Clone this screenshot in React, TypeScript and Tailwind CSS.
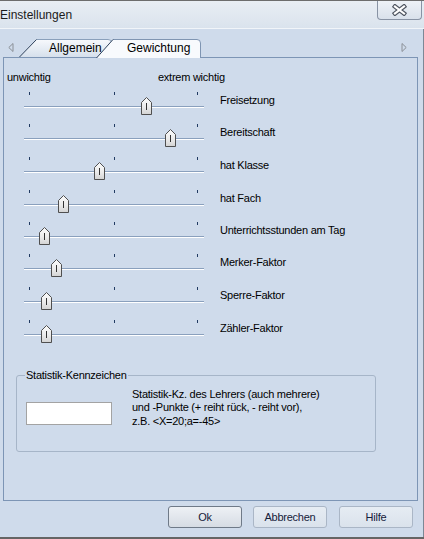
import React from "react";

type Row = { label: string; pos: number; h: string };

const rows: Row[] = [
  { label: "Freisetzung", pos: 117, h: "h-[32px]" },
  { label: "Bereitschaft", pos: 141, h: "h-[33px]" },
  { label: "hat Klasse", pos: 70, h: "h-[33px]" },
  { label: "hat Fach", pos: 34, h: "h-[32px]" },
  { label: "Unterrichtsstunden am Tag", pos: 15, h: "h-[32px]" },
  { label: "Merker-Faktor", pos: 27, h: "h-[33px]" },
  { label: "Sperre-Faktor", pos: 17, h: "h-[33px]" },
  { label: "Zähler-Faktor", pos: 17, h: "h-[33px]" },
];

function Thumb() {
  return (
    <svg width="11" height="18" viewBox="0 0 11 18">
      <defs>
        <linearGradient id="tg" x1="0" y1="0" x2="0" y2="1">
          <stop offset="0" stopColor="#fbfbfb" />
          <stop offset="0.55" stopColor="#ececec" />
          <stop offset="1" stopColor="#d3d3d3" />
        </linearGradient>
      </defs>
      <path
        d="M5.5 0.5 L10.5 5.5 L10.5 17.5 L0.5 17.5 L0.5 5.5 Z"
        fill="url(#tg)"
        stroke="#4f4f4f"
      />
      <line x1="5.5" y1="6" x2="5.5" y2="13" stroke="#333333" />
    </svg>
  );
}

function Slider({ pos }: { pos: number }) {
  return (
    <div className="relative w-[180px] h-full ml-[20px] shrink-0">
      <div className="absolute left-[5px] top-0 w-[1px] h-[3px] bg-[#213b62]" />
      <div className="absolute left-[90px] top-0 w-[1px] h-[3px] bg-[#213b62]" />
      <div className="absolute left-[173px] top-0 w-[1px] h-[3px] bg-[#213b62]" />
      <div className="absolute left-0 top-[14px] w-[180px] h-[1px] bg-[#8aa0bd]" />
      <div className="absolute left-0 top-[15px] w-[180px] h-[1px] bg-white" />
      <div className="absolute top-[5px] flex" style={{ left: pos }}>
        <Thumb />
      </div>
    </div>
  );
}

function Btn({ label, primary }: { label: string; primary?: boolean }) {
  return (
    <div
      className={
        primary
          ? "w-[74px] h-[22px] rounded-[3px] border border-[#6f7a88] bg-gradient-to-b from-[#eef1f5] to-[#d6dce4] flex items-center justify-center text-[11px] leading-[13px] tracking-[-0.25px] text-[#15203a]"
          : "w-[74px] h-[22px] rounded-[3px] border border-[#aab6c6] bg-gradient-to-b from-[#e6ecf3] to-[#dae2ec] flex items-center justify-center text-[11px] leading-[13px] tracking-[-0.25px] text-[#15203a]"
      }
    >
      {label}
    </div>
  );
}

export default function App() {
  return (
    <div className="w-[424px] h-[539px] flex flex-col overflow-hidden bg-[#cfdbeb] font-['Liberation_Sans',Arial,sans-serif] text-black">
      {/* Title bar */}
      <div className="h-[29px] shrink-0 border-t border-[#6d6d6d] border-b border-b-[#f1f5f9] bg-gradient-to-b from-[#e9eef4] to-[#dae3ed] flex justify-between">
        <div className="pt-[7px] text-[12px] leading-[14px] text-[#1a1a1a]">Einstellungen</div>
        <div className="w-[45px] h-[19px] mr-[2px] rounded-b-[4px] border border-t-0 border-[#8893a4] bg-gradient-to-b from-[#eef2f7] to-[#d9e1eb] flex items-center justify-center">
          <svg width="15" height="12" viewBox="0 0 15 12">
            <path d="M3 2.5 L12 9.5 M12 2.5 L3 9.5" stroke="#4e5560" strokeWidth="4.5" strokeLinecap="square" />
            <path d="M3 2.5 L12 9.5 M12 2.5 L3 9.5" stroke="#ffffff" strokeWidth="2.2" strokeLinecap="square" />
          </svg>
        </div>
      </div>

      {/* Client area */}
      <div className="flex-1 flex flex-col border-r border-[#7c8896]">
        {/* Tab row */}
        <div className="h-[29px] mb-[-1px] flex items-start relative z-10">
          <div className="mt-[14px] ml-[8px] flex">
            <svg width="6" height="9" viewBox="0 0 6 9">
              <path d="M5 0.5 L0.8 4.5 L5 8.5 Z" fill="none" stroke="#8a8f96" />
            </svg>
          </div>
          <div className="mt-[10px] ml-[5px] flex items-start">
            <div className="relative w-[93px] h-[18px]">
              <svg className="absolute inset-0" width="93" height="18" viewBox="0 0 93 18">
                <defs>
                  <linearGradient id="ag" x1="0" y1="0" x2="0" y2="1">
                    <stop offset="0" stopColor="#f7f9fc" />
                    <stop offset="1" stopColor="#d6e0ec" />
                  </linearGradient>
                </defs>
                <path d="M0.5 18 L17.5 0.5 L89 0.5 Q92.5 0.5 92.5 3.5 L92.5 18 Z" fill="url(#ag)" />
                <path d="M17.5 0.5 L89 0.5 Q92.5 0.5 92.5 3.5 L92.5 18" fill="none" stroke="#8aa0bb" />
                <path d="M0.5 18 L17.5 0.5" fill="none" stroke="#2f425c" />
              </svg>
              <div className="relative pl-[30px] pt-[2px] text-[12px] leading-[14px]">Allgemein</div>
            </div>
            <div className="relative w-[105px] h-[19px] -ml-[16px]">
              <svg className="absolute inset-0" width="105" height="19" viewBox="0 0 105 19">
                <path d="M0.5 19 L17 0.5 L101 0.5 Q104.5 0.5 104.5 4 L104.5 19 Z" fill="#f8fafd" />
                <path d="M17 0.5 L101 0.5 Q104.5 0.5 104.5 4 L104.5 19" fill="none" stroke="#7f95b2" />
                <path d="M0.5 19 L17 0.5" fill="none" stroke="#2f425c" />
              </svg>
              <div className="relative pl-[31px] pt-[2px] text-[12px] leading-[14px]">Gewichtung</div>
            </div>
          </div>
          <div className="mt-[14px] ml-auto mr-[16px] flex">
            <svg width="6" height="9" viewBox="0 0 6 9">
              <path d="M1 0.5 L5.2 4.5 L1 8.5 Z" fill="none" stroke="#8a8f96" />
            </svg>
          </div>
        </div>

        {/* Panel */}
        <div className="ml-[3px] w-[415px] h-[444px] border border-[#7d95b5] flex flex-col text-[11px] leading-[13px] tracking-[-0.25px]">
          <div className="flex pt-[13px]">
            <div className="w-[154px] pl-[3px]">unwichtig</div>
            <div>extrem wichtig</div>
          </div>
          <div className="mt-[8px] flex flex-col">
            {rows.map((r) => (
              <div key={r.label} className={"flex items-start " + r.h}>
                <Slider pos={r.pos} />
                <div className="ml-[16px] mt-[2px] whitespace-nowrap">{r.label}</div>
              </div>
            ))}
          </div>

          {/* Group box */}
          <div className="relative mt-[22px] ml-[12px] w-[360px] h-[77px] border border-[#a6b5c8] rounded-[3px]">
            <div className="absolute -top-[7px] left-[8px] px-[1px] bg-[#cfdbeb]">Statistik-Kennzeichen</div>
            <div className="flex items-start pt-[12px]">
              <div className="ml-[9px] mt-[14px] w-[86px] h-[23px] bg-white border border-[#a3a3a3] shrink-0" />
              <div className="ml-[20px] leading-[13.3px] whitespace-nowrap">
                <div>Statistik-Kz. des Lehrers (auch mehrere)</div>
                <div>und -Punkte (+ reiht rück, - reiht vor),</div>
                <div>z.B. &lt;X=20;a=-45&gt;</div>
              </div>
            </div>
          </div>
        </div>

        {/* Buttons */}
        <div className="mt-[5px] flex justify-end pr-[10px]">
          <Btn label="Ok" primary />
          <div className="ml-[11px]">
            <Btn label="Abbrechen" />
          </div>
          <div className="ml-[12px]">
            <Btn label="Hilfe" />
          </div>
        </div>
      </div>
      <div className="h-[2px] shrink-0 bg-[#656565]" />
    </div>
  );
}
